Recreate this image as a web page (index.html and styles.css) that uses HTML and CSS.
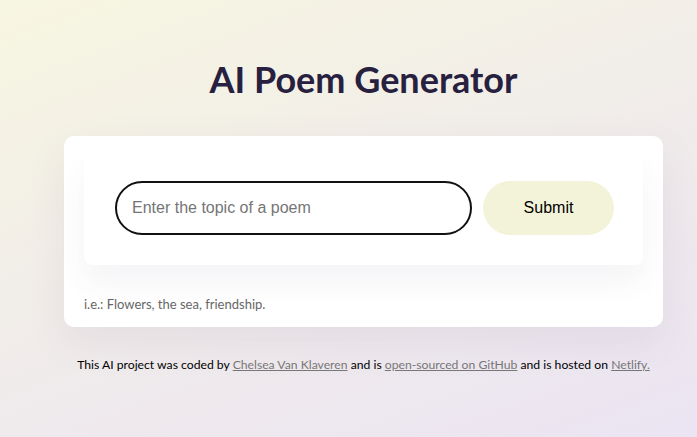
FILE: index.html
```html
<!DOCTYPE html>
<html lang="en">
<head>
<meta charset="utf-8">
<title>AI Poem Generator</title>
<link rel="stylesheet" href="styles.css">
</head>
<body>
<div class="page">
  <h1 class="title">AI Poem Generator</h1>
  <div class="card">
    <form class="form-box">
      <input class="topic" type="text" placeholder="Enter the topic of a poem">
      <button class="submit" type="button">Submit</button>
    </form>
    <p class="hint">i.e.: Flowers, the sea, friendship.</p>
  </div>
  <footer class="footer">This AI project was coded by <a href="#">Chelsea Van Klaveren</a> and is <a href="#">open-sourced on GitHub</a> and is hosted on <a href="#">Netlify.</a></footer>
</div>
</body>
</html>
```
FILE: styles.css
```css
html, body {
  margin: 0;
  height: 100%;
}
body {
  background: linear-gradient(160deg, #f7f6e1 0%, #f1ede9 45%, #ebe4f3 100%);
  font-family: "Lato", "DejaVu Sans", sans-serif;
}
.page {
  width: 599px;
  margin-left: 64px;
  padding-top: 57px;
}
.title {
  margin: 0;
  text-align: center;
  font-size: 36px;
  font-weight: 700;
  color: #27203f;
  line-height: 44px;
}
.card {
  margin-top: 35px;
  background: #fff;
  border-radius: 10px;
  box-shadow: 0 15px 40px rgba(90, 70, 110, 0.08);
  padding: 15px 20px 15px;
}
.form-box {
  display: flex;
  align-items: center;
  gap: 11px;
  padding: 30px 29px 30px 31px;
  background: #fff;
  border-radius: 8px;
  box-shadow: 0 18px 30px rgba(80, 60, 110, 0.06);
}
.topic {
  flex: 1;
  height: 54px;
  box-sizing: border-box;
  border: 2px solid #111;
  border-radius: 27px;
  padding: 0 15px;
  font-family: "Liberation Sans", Arial, sans-serif;
  font-size: 16px;
  outline: none;
}
.topic::placeholder {
  color: #757575;
}
.submit {
  width: 131px;
  height: 54px;
  border: none;
  border-radius: 27px;
  background: #f3f3da;
  font-family: "Liberation Sans", Arial, sans-serif;
  font-size: 16px;
  color: #000;
}
.hint {
  margin: 31px 0 0;
  font-size: 13px;
  color: #666;
  line-height: 16px;
}
.footer {
  margin-top: 30px;
  text-align: center;
  font-size: 12.2px;
  color: #000;
}
.footer a {
  color: #777;
}
```
